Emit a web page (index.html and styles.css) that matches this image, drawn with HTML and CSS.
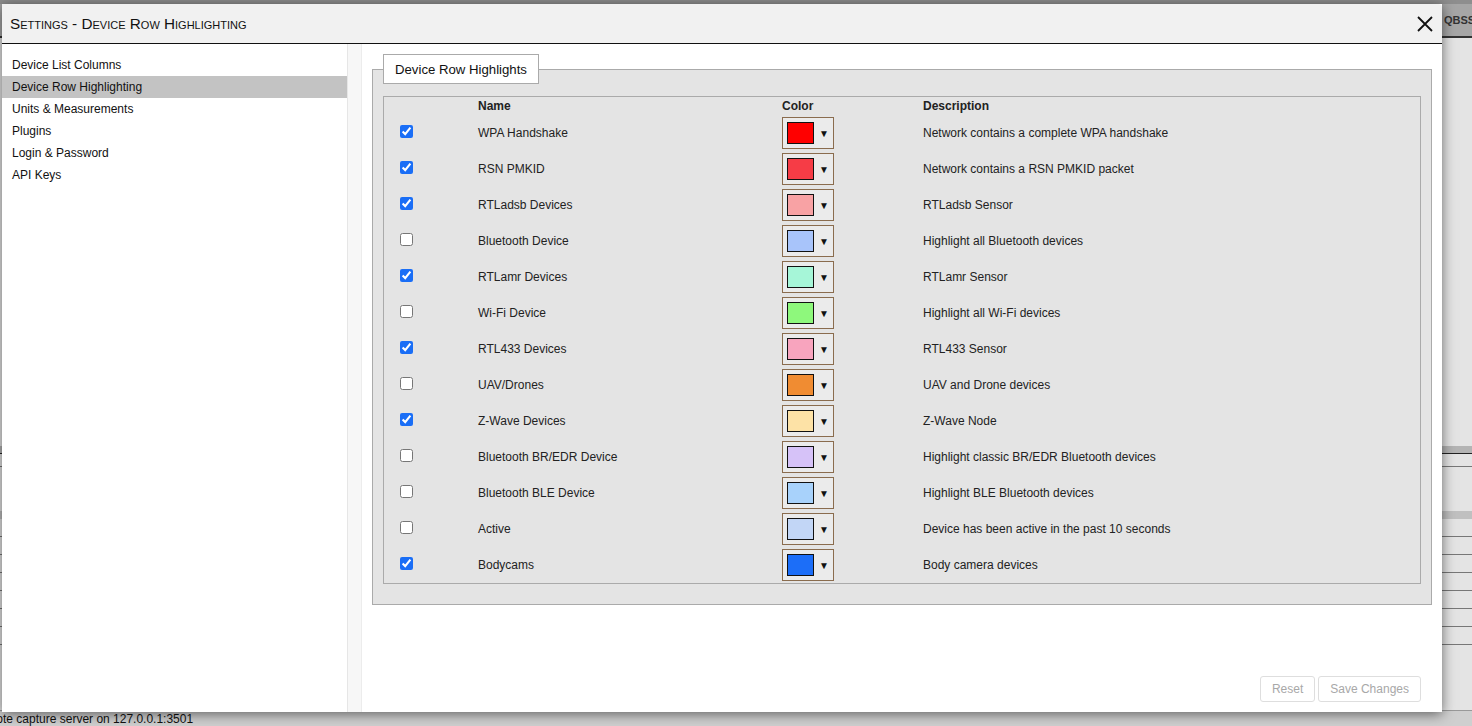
FILE: index.html
```html
<!DOCTYPE html>
<html>
<head>
<meta charset="utf-8">
<link rel="stylesheet" href="styles.css">
</head>
<body>
<div class="app">
  <div class="app-top"><span class="app-col">QBSS</span></div>
  <div class="app-body">
    <div class="app-bar bar1"></div>
    <div class="app-line l1"></div>
    <div class="app-bar bar2"></div>
    <div class="app-line l2"></div>
    <div class="app-line l3"></div>
    <div class="app-line l4"></div>
    <div class="app-line l5"></div>
    <div class="app-line l6"></div>
    <div class="app-line l7"></div>
    <div class="app-line l8"></div>
  </div>
  <div class="app-status">Remote capture server on 127.0.0.1:3501</div>
</div>

<div class="dialog">
  <div class="titlebar">
    <span class="title">Settings - Device Row Highlighting</span>
    <span class="close">
      <svg width="16" height="16" viewBox="0 0 16 16"><path d="M1 1L15 15M15 1L1 15" stroke="#111" stroke-width="1.8" fill="none"/></svg>
    </span>
  </div>
  <div class="main">
    <ul class="nav">
      <li>Device List Columns</li>
      <li class="active">Device Row Highlighting</li>
      <li>Units &amp; Measurements</li>
      <li>Plugins</li>
      <li>Login &amp; Password</li>
      <li>API Keys</li>
    </ul>
    <div class="splitter"></div>
    <div class="content">
      <fieldset class="group">
        <legend>Device Row Highlights</legend>
        <div class="table">
          <div class="row head">
            <span></span><span>Name</span><span>Color</span><span>Description</span>
          </div>
          <div class="row"><span><input type="checkbox" checked></span><span>WPA Handshake</span><span><span class="cbtn"><span class="sw" style="background:#ff0000"></span><span class="arr">▼</span></span></span><span>Network contains a complete WPA handshake</span></div>
          <div class="row"><span><input type="checkbox" checked></span><span>RSN PMKID</span><span><span class="cbtn"><span class="sw" style="background:#f63c46"></span><span class="arr">▼</span></span></span><span>Network contains a RSN PMKID packet</span></div>
          <div class="row"><span><input type="checkbox" checked></span><span>RTLadsb Devices</span><span><span class="cbtn"><span class="sw" style="background:#f8a2a4"></span><span class="arr">▼</span></span></span><span>RTLadsb Sensor</span></div>
          <div class="row"><span><input type="checkbox"></span><span>Bluetooth Device</span><span><span class="cbtn"><span class="sw" style="background:#a8c4fa"></span><span class="arr">▼</span></span></span><span>Highlight all Bluetooth devices</span></div>
          <div class="row"><span><input type="checkbox" checked></span><span>RTLamr Devices</span><span><span class="cbtn"><span class="sw" style="background:#a6f6d8"></span><span class="arr">▼</span></span></span><span>RTLamr Sensor</span></div>
          <div class="row"><span><input type="checkbox"></span><span>Wi-Fi Device</span><span><span class="cbtn"><span class="sw" style="background:#8ef87c"></span><span class="arr">▼</span></span></span><span>Highlight all Wi-Fi devices</span></div>
          <div class="row"><span><input type="checkbox" checked></span><span>RTL433 Devices</span><span><span class="cbtn"><span class="sw" style="background:#f8a4be"></span><span class="arr">▼</span></span></span><span>RTL433 Sensor</span></div>
          <div class="row"><span><input type="checkbox"></span><span>UAV/Drones</span><span><span class="cbtn"><span class="sw" style="background:#f08c32"></span><span class="arr">▼</span></span></span><span>UAV and Drone devices</span></div>
          <div class="row"><span><input type="checkbox" checked></span><span>Z-Wave Devices</span><span><span class="cbtn"><span class="sw" style="background:#fde2a6"></span><span class="arr">▼</span></span></span><span>Z-Wave Node</span></div>
          <div class="row"><span><input type="checkbox"></span><span>Bluetooth BR/EDR Device</span><span><span class="cbtn"><span class="sw" style="background:#d6c2f8"></span><span class="arr">▼</span></span></span><span>Highlight classic BR/EDR Bluetooth devices</span></div>
          <div class="row"><span><input type="checkbox"></span><span>Bluetooth BLE Device</span><span><span class="cbtn"><span class="sw" style="background:#a8d2fb"></span><span class="arr">▼</span></span></span><span>Highlight BLE Bluetooth devices</span></div>
          <div class="row"><span><input type="checkbox"></span><span>Active</span><span><span class="cbtn"><span class="sw" style="background:#c2d6f6"></span><span class="arr">▼</span></span></span><span>Device has been active in the past 10 seconds</span></div>
          <div class="row"><span><input type="checkbox" checked></span><span>Bodycams</span><span><span class="cbtn"><span class="sw" style="background:#1c6ef8"></span><span class="arr">▼</span></span></span><span>Body camera devices</span></div>
        </div>
      </fieldset>
      <div class="spacer"></div>
      <div class="actions">
        <button class="btn">Reset</button>
        <button class="btn">Save Changes</button>
      </div>
    </div>
  </div>
</div>
</body>
</html>
```

FILE: styles.css
```css
* { box-sizing: border-box; }
html, body { margin: 0; padding: 0; }
body {
  width: 1472px;
  height: 726px;
  overflow: hidden;
  font-family: "Liberation Sans", Arial, sans-serif;
  font-size: 12px;
  color: #222;
  background: #e2e2e2;
  position: relative;
}

/* background application */
.app { display: flex; flex-direction: column; height: 726px; }
.app-top {
  height: 38px;
  background: linear-gradient(#8e8e8e 0, #8e8e8e 4px, #a6a6a6 4px);
  border-bottom: 2px solid #333;
  display: flex;
  justify-content: flex-end;
  align-items: center;
  padding-top: 4px;
}
.app-col { font-weight: bold; font-size: 11px; color: #333; width: 28px; overflow: hidden; white-space: nowrap; }
.app-body { flex: 1; background: #e4e4e4; display: flex; flex-direction: column; }
.app-bar { height: 8px; background: #b4b4b4; }
.bar1 { margin-top: 408px; border-bottom: 1px solid #222; }
.bar2 { margin-top: 44px; height: 8px; background: #c0c0c0; }
.app-line { height: 1px; background: #777; margin-top: 17px; }
.l1 { margin-top: 12px; }
.app-status {
  height: 16px;
  background: #cfcfcf;
  border-top: 1px solid #999;
  font-size: 12px;
  color: #111;
  line-height: 16px;
  text-indent: -29px;
  white-space: nowrap;
  overflow: hidden;
}

/* dialog */
.dialog {
  position: absolute;
  left: 2px;
  top: 4px;
  width: 1440px;
  height: 708px;
  background: #fff;
  box-shadow: 0 2px 12px rgba(0,0,0,0.55);
  display: flex;
  flex-direction: column;
}
.titlebar {
  height: 40px;
  background: #f1f1f1;
  border-bottom: 1px solid #111;
  display: flex;
  align-items: center;
  justify-content: space-between;
  padding: 0 7px 0 8px;
  border-top-right-radius: 4px;
}
.title {
  font-variant: small-caps;
  font-size: 15.3px;
  color: #111;
}
.close { display: flex; width: 20px; height: 20px; align-items: center; justify-content: center; }

.main { flex: 1; display: flex; min-height: 0; }
.nav {
  list-style: none;
  margin: 0;
  padding: 10px 0 0 0;
  width: 345px;
}
.nav li {
  height: 22px;
  line-height: 22px;
  padding-left: 10px;
  color: #111;
}
.nav li.active { background: #c3c3c3; }
.splitter {
  width: 15px;
  background: #f7f7f7;
  border-left: 1px solid #e6e6e6;
  border-right: 1px solid #ececec;
}
.content {
  flex: 1;
  display: flex;
  flex-direction: column;
  padding: 0 10px 10px 10px;
}
.group {
  margin: 10px 0 0 0;
  padding: 11px 10px 20px 10px;
  background: #e4e4e4;
  border: 1px solid #aaa;
  min-width: 0;
}
.group legend {
  background: #fff;
  border: 1px solid #aaa;
  padding: 0 11px;
  height: 30px;
  line-height: 29px;
  font-size: 13.2px;
  color: #111;
  margin-left: 0;
}
.table {
  border: 1px solid #aaa;
  margin-top: 1px;
  padding: 0 0 0 16px;
}
.row {
  display: grid;
  grid-template-columns: 78px 304px 141px 1fr;
  height: 36px;
  align-items: center;
  color: #222;
}
.row.head { height: 18px; font-weight: bold; color: #222; }
.row input {
  margin: 0;
  width: 13px;
  height: 13px;
  accent-color: #1a6ef6;
  display: block;
  position: relative;
  top: -2px;
}
.cbtn {
  display: flex;
  align-items: center;
  width: 52px;
  height: 32px;
  border: 1px solid #8a6c4e;
  background: #ebebeb;
  padding-left: 4px;
}
.sw {
  width: 27px;
  height: 22px;
  border: 1px solid #111;
  display: block;
}
.arr { font-size: 10px; margin-left: 5px; color: #111; }

.spacer { flex: 1; }
.actions { display: flex; justify-content: flex-end; gap: 3px; padding-right: 11px; }
.btn {
  font-family: "Liberation Sans", Arial, sans-serif;
  font-size: 12px;
  color: #a8a8a8;
  background: #fff;
  border: 1px solid #dedede;
  border-radius: 3px;
  height: 26px;
  padding: 0 11px;
}
```
